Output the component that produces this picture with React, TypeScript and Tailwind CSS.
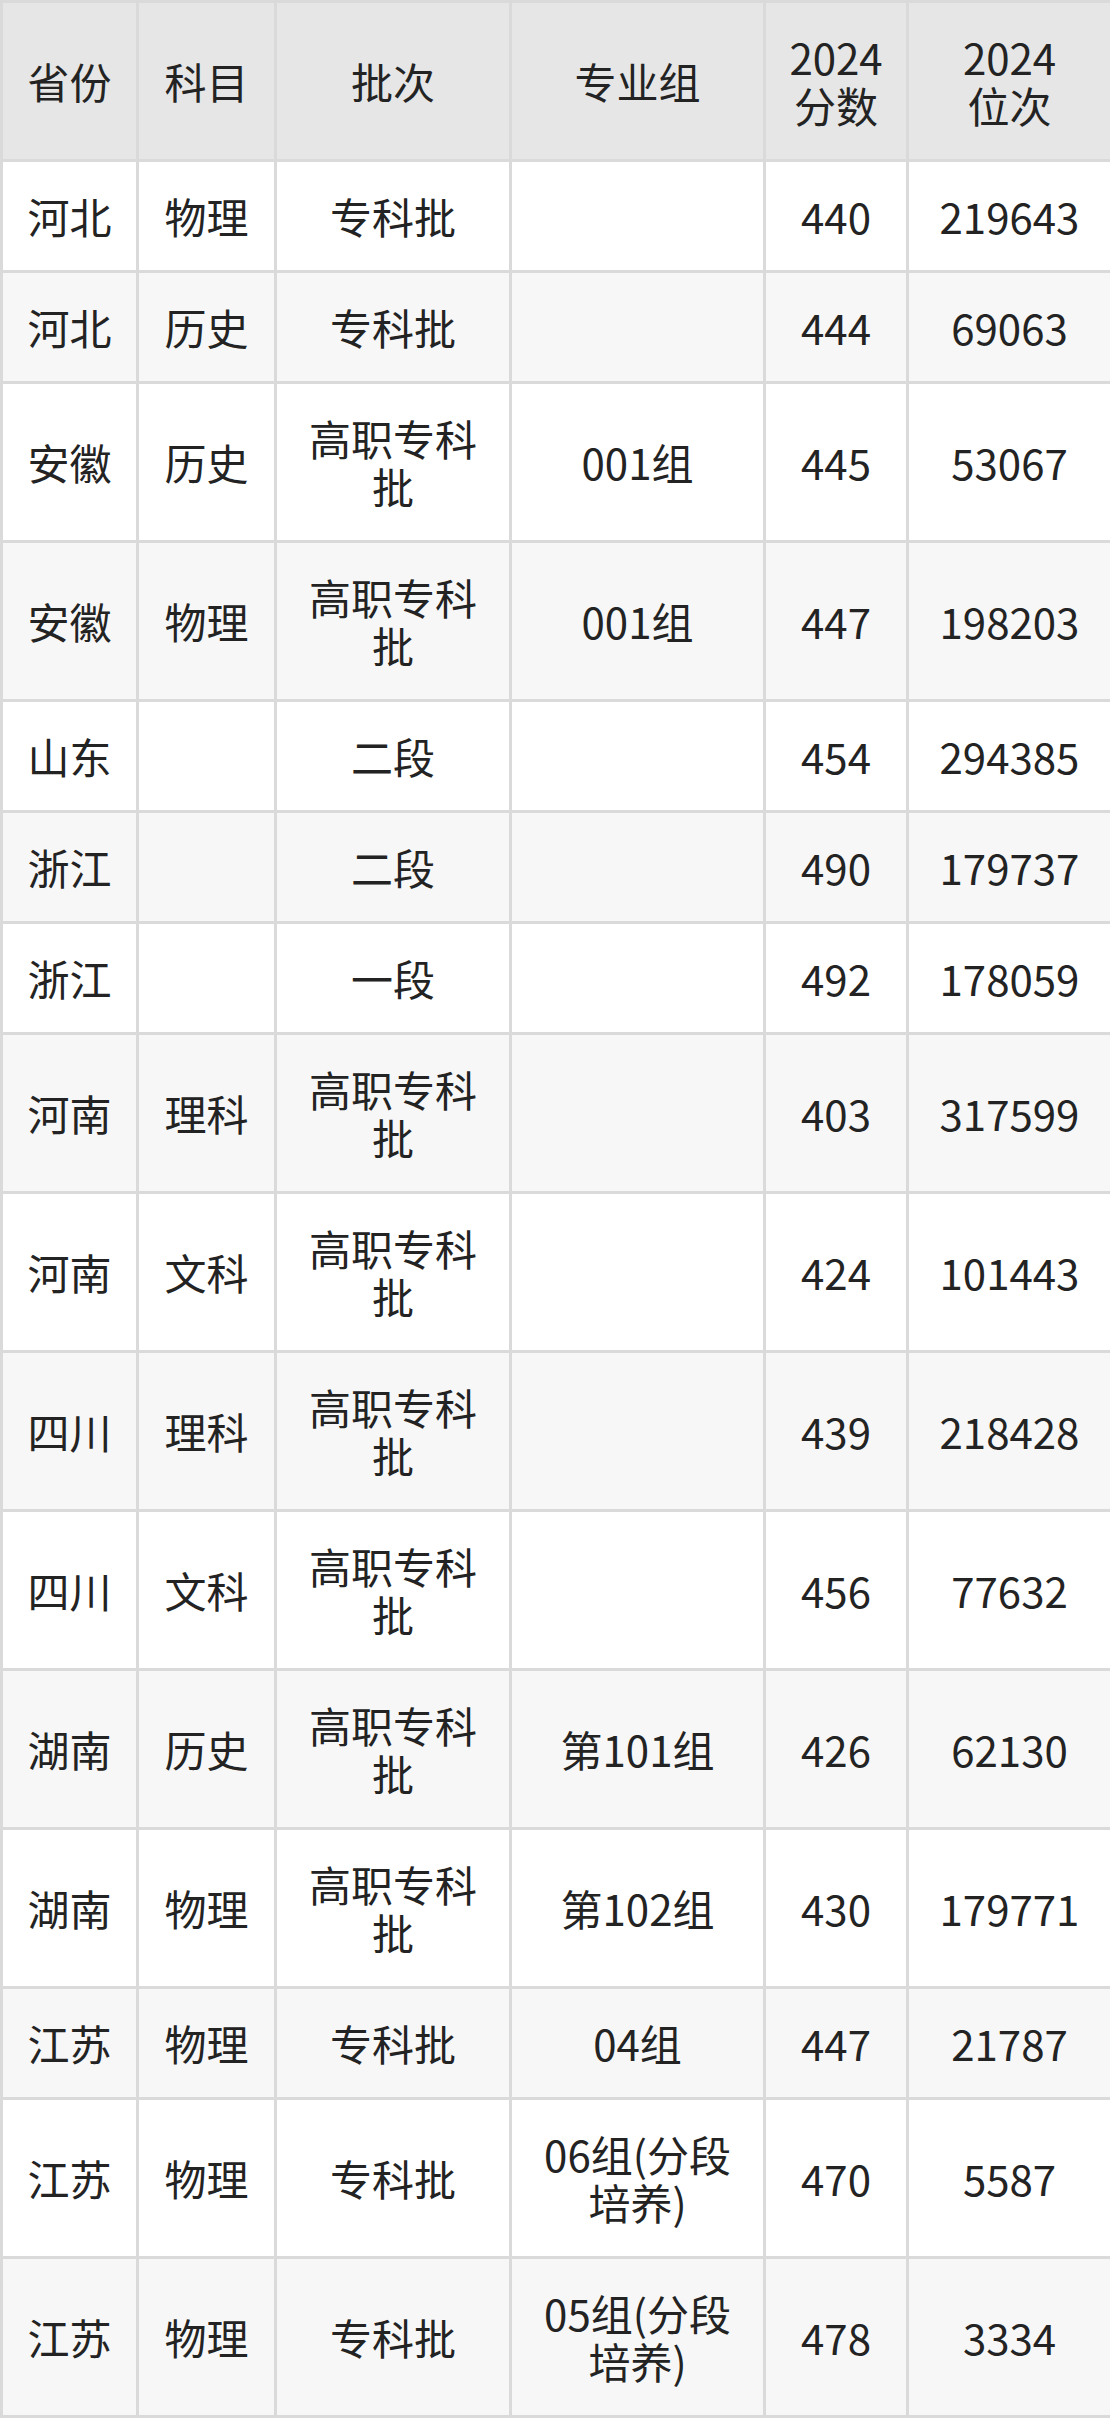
type Row = [string, string, string, string, string, string];

const header = ["省份", "科目", "批次", "专业组", "2024|分数", "2024|位次"];

const rows: Row[] = [
  ["河北", "物理", "专科批", "", "440", "219643"],
  ["河北", "历史", "专科批", "", "444", "69063"],
  ["安徽", "历史", "高职专科批", "001组", "445", "53067"],
  ["安徽", "物理", "高职专科批", "001组", "447", "198203"],
  ["山东", "", "二段", "", "454", "294385"],
  ["浙江", "", "二段", "", "490", "179737"],
  ["浙江", "", "一段", "", "492", "178059"],
  ["河南", "理科", "高职专科批", "", "403", "317599"],
  ["河南", "文科", "高职专科批", "", "424", "101443"],
  ["四川", "理科", "高职专科批", "", "439", "218428"],
  ["四川", "文科", "高职专科批", "", "456", "77632"],
  ["湖南", "历史", "高职专科批", "第101组", "426", "62130"],
  ["湖南", "物理", "高职专科批", "第102组", "430", "179771"],
  ["江苏", "物理", "专科批", "04组", "447", "21787"],
  ["江苏", "物理", "专科批", "06组(分段培养)", "470", "5587"],
  ["江苏", "物理", "专科批", "05组(分段培养)", "478", "3334"],
];

const widths = ["w-[136px]", "w-[138px]", "w-[235px]", "w-[254px]", "w-[143px]", "w-[204px]"];

const cell =
  "border-[3px] border-[#dadada] px-[20px] py-[30px] text-center align-middle leading-[48px]";

export default function App() {
  return (
    <div className="w-[1110px] bg-white font-['Noto_Sans_CJK_SC',sans-serif] text-[42px] text-[#232323]">
      <table className="w-[1110px] table-fixed border-collapse">
        <colgroup>
          {widths.map((w, i) => (
            <col key={i} className={w} />
          ))}
        </colgroup>
        <thead>
          <tr className="bg-[#e6e6e6]">
            {header.map((h, i) => {
              const [a, b] = h.split("|");
              return (
                <th key={i} className={`${cell} font-normal`}>
                  {a}
                  {b && (
                    <>
                      <br />
                      {b}
                    </>
                  )}
                </th>
              );
            })}
          </tr>
        </thead>
        <tbody>
          {rows.map((r, i) => (
            <tr key={i} className={i % 2 === 1 ? "bg-[#f7f7f7]" : "bg-white"}>
              {r.map((c, j) => (
                <td key={j} className={cell}>
                  {c}
                </td>
              ))}
            </tr>
          ))}
        </tbody>
      </table>
    </div>
  );
}
